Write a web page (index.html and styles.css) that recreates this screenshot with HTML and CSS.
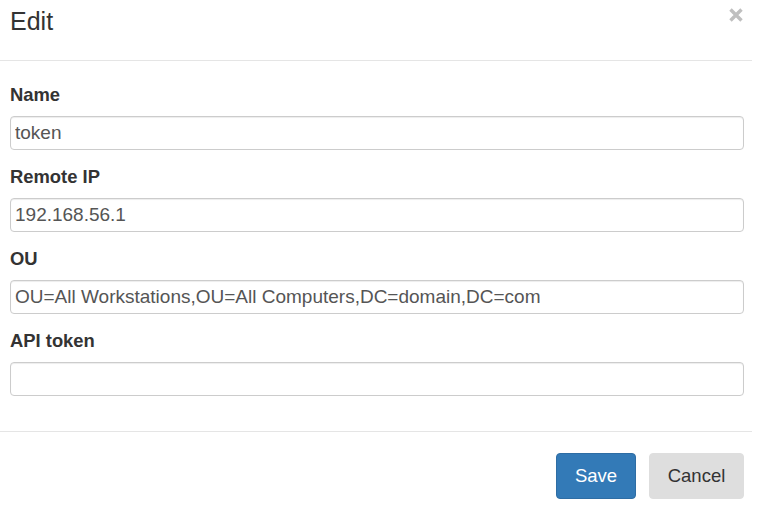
FILE: index.html
```html
<!DOCTYPE html>
<html>
<head>
<meta charset="utf-8">
<link rel="stylesheet" href="styles.css">
</head>
<body>
<div class="modal">
  <div class="modal-header">
    <h4 class="modal-title">Edit</h4>
    <button class="close" type="button" aria-label="Close">
      <svg width="14" height="14" viewBox="0 0 14 14"><path d="M1.5 1.5 L12.5 12.5 M12.5 1.5 L1.5 12.5" stroke="#bfbfbf" stroke-width="3.4" stroke-linecap="butt"/></svg>
    </button>
  </div>
  <div class="modal-body">
    <div class="form-group">
      <label class="control-label">Name</label>
      <input class="form-control" type="text" value="token">
    </div>
    <div class="form-group">
      <label class="control-label">Remote IP</label>
      <input class="form-control" type="text" value="192.168.56.1">
    </div>
    <div class="form-group">
      <label class="control-label">OU</label>
      <input class="form-control" type="text" value="OU=All Workstations,OU=All Computers,DC=domain,DC=com">
    </div>
    <div class="form-group">
      <label class="control-label">API token</label>
      <input class="form-control" type="text" value="">
    </div>
  </div>
  <div class="modal-footer">
    <button class="btn btn-primary" type="button">Save</button>
    <button class="btn btn-default" type="button">Cancel</button>
  </div>
</div>
</body>
</html>
```
FILE: styles.css
```css
html, body {
  margin: 0;
  padding: 0;
  background: #fff;
}
body {
  font-family: "Liberation Sans", Arial, sans-serif;
  color: #333;
}
.modal {
  width: 752px;
  background: #fff;
}
.modal-header {
  display: flex;
  justify-content: space-between;
  align-items: flex-start;
  padding: 6px 9px 24px 10px;
  border-bottom: 1px solid #e5e5e5;
}
.modal-title {
  margin: 0;
  font-size: 25px;
  line-height: 30px;
  font-weight: normal;
  color: #333;
}
.close {
  margin: 2px 0 0 0;
  padding: 0;
  border: 0;
  background: transparent;
  width: 14px;
  height: 14px;
  display: flex;
  cursor: pointer;
}
.modal-body {
  padding: 24px 8px 35px 10px;
  display: flex;
  flex-direction: column;
  gap: 17px;
}
.form-group {
  display: flex;
  flex-direction: column;
}
.control-label {
  font-size: 18.4px;
  line-height: 20px;
  font-weight: bold;
  color: #333;
  margin-bottom: 11px;
}
.form-control {
  box-sizing: border-box;
  width: 100%;
  height: 34px;
  margin: 0;
  padding: 0 4px;
  font-family: "Liberation Sans", Arial, sans-serif;
  font-size: 19px;
  color: #555;
  background: #fff;
  border: 1px solid #ccc;
  border-radius: 4px;
  box-shadow: inset 0 1px 1px rgba(0,0,0,.075);
  outline: none;
}
.modal-footer {
  display: flex;
  justify-content: flex-end;
  gap: 13px;
  padding: 21px 8px 12px 10px;
  border-top: 1px solid #e5e5e5;
}
.btn {
  box-sizing: border-box;
  height: 46px;
  margin: 0;
  font-family: "Liberation Sans", Arial, sans-serif;
  font-size: 18.5px;
  border-radius: 4px;
  border: 1px solid transparent;
  cursor: pointer;
}
.btn-primary {
  width: 80px;
  background: #337ab7;
  border-color: #2e6da4;
  color: #fff;
}
.btn-default {
  width: 95px;
  background: #dedede;
  border-color: #dedede;
  color: #333;
}
```
